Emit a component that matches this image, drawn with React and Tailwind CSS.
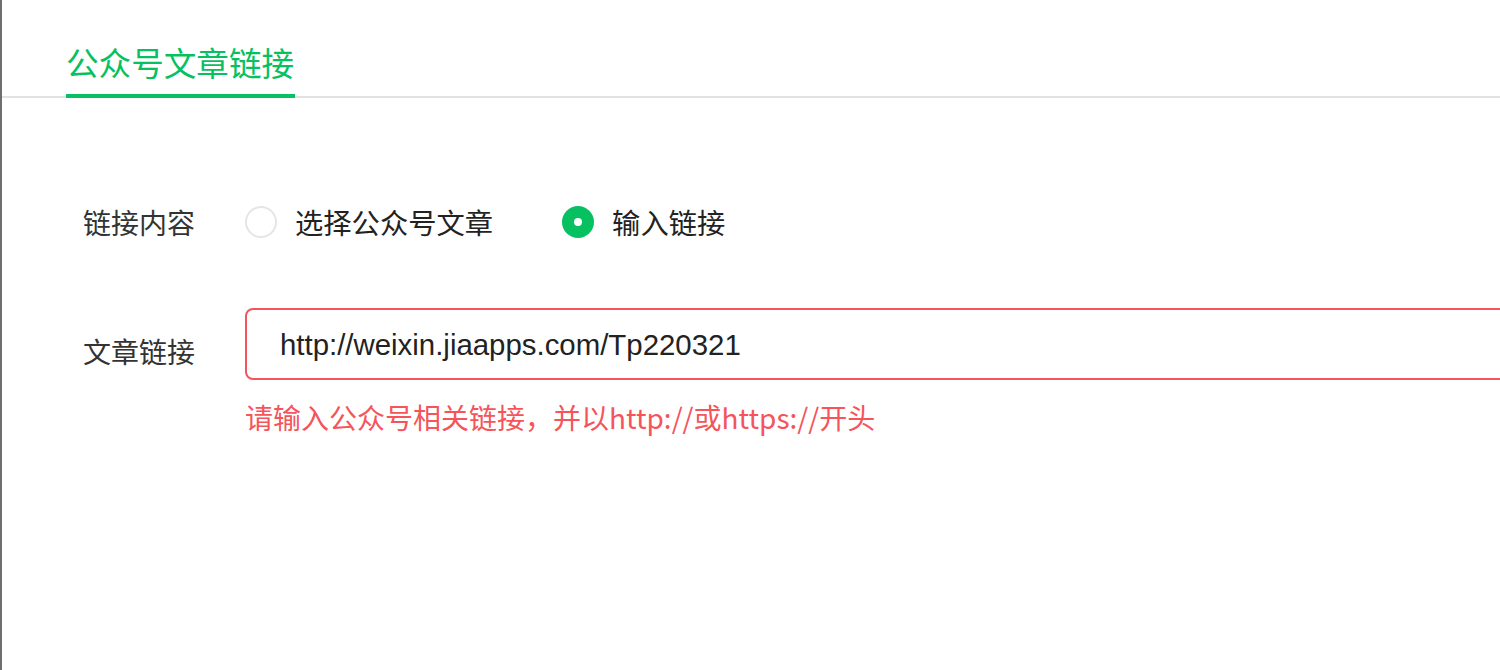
export default function App() {
    const font = { fontFamily: '"PingFang SC", "Noto Sans CJK SC", "Liberation Sans", sans-serif' }

    return (
        <div className="w-[1500px] h-[670px] bg-white border-l-2 border-[#6f6f6f] overflow-hidden" style={font}>
            {/* tab bar */}
            <div className="h-[98px] border-b-2 border-[#e2e2e2] pl-[64px] flex items-end">
                <div className="relative top-[2px] h-[56px] border-b-4 border-[#07c160] text-[32.6px] leading-[40px] text-[#07c160] pr-[1px]">
                    公众号文章链接
                </div>
            </div>

            <div className="pl-[81px] pt-[104px]">
                {/* radio row */}
                <div className="flex items-center h-[40px]">
                    <div className="w-[162px] shrink-0 text-[28px] text-[#333]">链接内容</div>
                    <label className="flex items-center mr-[69px]">
                        <span className="w-[32px] h-[32px] rounded-full border-2 border-[#e5e5e5]" />
                        <span className="ml-[18px] text-[28.3px] text-[#222]">选择公众号文章</span>
                    </label>
                    <label className="flex items-center">
                        <span className="w-[32px] h-[32px] rounded-full bg-[#07c160] flex items-center justify-center">
                            <span className="w-[8px] h-[8px] rounded-full bg-white" />
                        </span>
                        <span className="ml-[18px] text-[28.3px] text-[#222]">输入链接</span>
                    </label>
                </div>

                {/* link input row */}
                <div className="flex mt-[66px]">
                    <div className="w-[162px] shrink-0 text-[28px] text-[#333] pt-[22px]">文章链接</div>
                    <div className="shrink-0">
                        <div className="h-[72px] w-[1300px] border-2 border-[#f5545b] rounded-[8px] flex items-center pl-[33px] pt-[2px] text-[29.4px] text-[#222]" style={{ fontFamily: '"Liberation Sans", "Noto Sans CJK SC", sans-serif' }}>
                            http://weixin.jiaapps.com/Tp220321
                        </div>
                        <div className="mt-[17px] text-[28px] leading-[40px] text-[#f5545b]">
                            请输入公众号相关链接，并以http://或https://开头
                        </div>
                    </div>
                </div>
            </div>
        </div>
    )
}
